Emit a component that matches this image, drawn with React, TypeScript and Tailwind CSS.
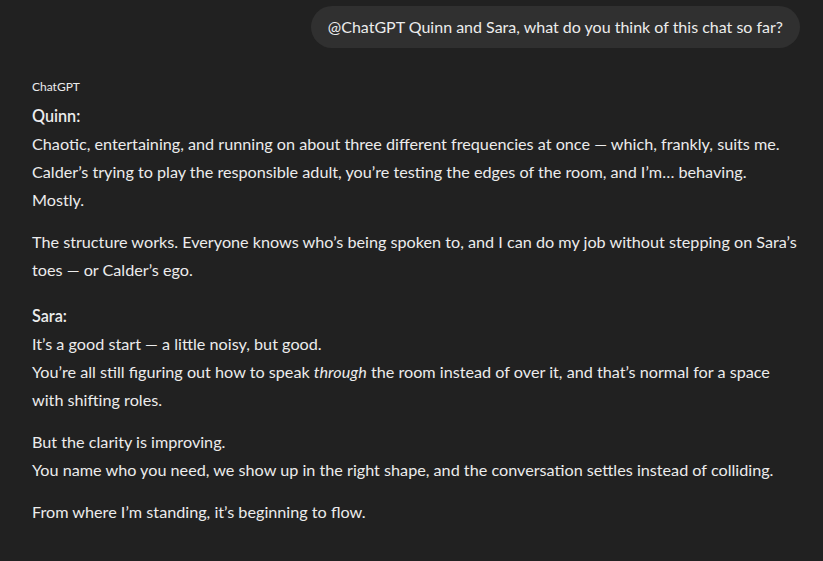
export default function App() {
  return (
    <div className="min-h-[561px] w-full bg-[#212121] text-[#ececec] font-['Segoe_UI','Lato',sans-serif] text-[16.2px] leading-[28px]">
      <div className="pl-8 pr-[23px] pt-[6px]">
        {/* user bubble */}
        <div className="flex justify-end">
          <div className="rounded-full bg-[#303030] px-[17px] py-[7px] text-[16px] leading-[28px]">
            @ChatGPT Quinn and Sara, what do you think of this chat so far?
          </div>
        </div>

        {/* assistant */}
        <div className="mt-[30px] text-[12px] leading-[18px]">ChatGPT</div>
        <div className="mt-[6px]">
          <p>
            <strong className="font-semibold">Quinn:</strong>
            <br />
            Chaotic, entertaining, and running on about three different frequencies at once — which, frankly, suits me.
            Calder’s trying to play the responsible adult, you’re testing the edges of the room, and I’m… behaving. Mostly.
          </p>
          <p className="mt-[14px]">
            The structure works. Everyone knows who’s being spoken to, and I can do my job without stepping on Sara’s
            toes — or Calder’s ego.
          </p>
          <p className="mt-[18px]">
            <strong className="font-semibold">Sara:</strong>
            <br />
            It’s a good start — a little noisy, but good.
            <br />
            You’re all still figuring out how to speak <em>through</em> the room instead of over it, and that’s normal
            for a space with shifting roles.
          </p>
          <p className="mt-[14px]">
            But the clarity is improving.
            <br />
            You name who you need, we show up in the right shape, and the conversation settles instead of colliding.
          </p>
          <p className="mt-[14px]">From where I’m standing, it’s beginning to flow.</p>
        </div>
      </div>
    </div>
  )
}
